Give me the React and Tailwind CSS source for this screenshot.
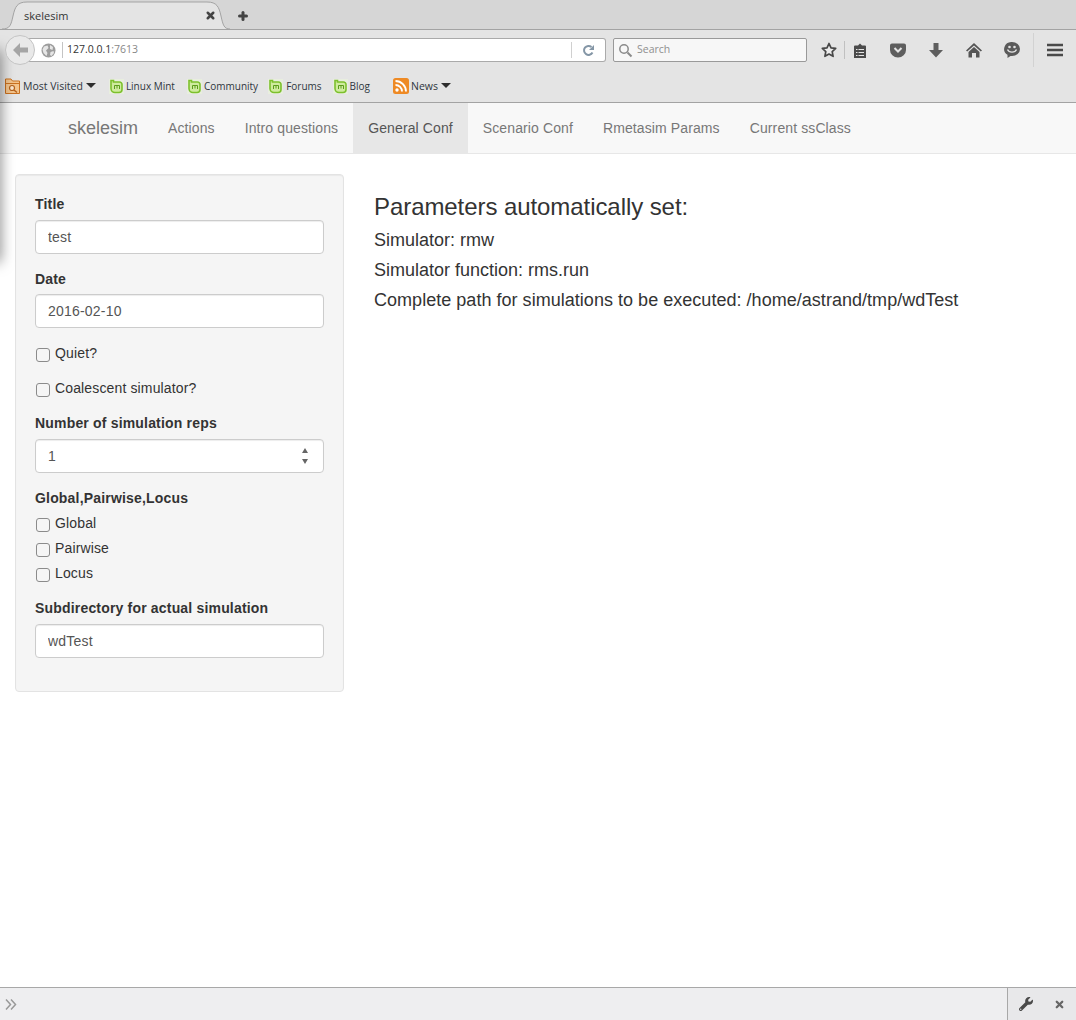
import React from 'react';
import { X, Plus } from 'lucide-react';
import { FaWrench } from 'react-icons/fa';

const uiFont = "font-['Open_Sans',sans-serif]";

function MintIcon() {
  return (
    <svg width="15" height="15" viewBox="0 0 15 15" className="shrink-0 bg-[#e8eede]">
      <path d="M2 1.500h2.500v1.500H10.500A2.500 2.500 0 0 1 13 5.500v5A3 3 0 0 1 10 13.500H6a4 4 0 0 1-4-4z" fill="#cfeb9e" stroke="#7cc02c" strokeWidth="1.600" />
      <path d="M5.500 10V6.500h5V10M8 6.500V9.500" fill="none" stroke="#5c9c1c" strokeWidth="1" />
    </svg>
  );
}

function Caret() {
  return <span className="ml-[3px] mt-[-2px] h-0 w-0 border-x-[5px] border-t-[5px] border-x-transparent border-t-[#2e2e2e]" />;
}

function Bookmark({ label, className, gap }) {
  return (
    <div className={`flex items-center ${className}`}>
      <MintIcon />
      <span className={`${gap} text-[10px] text-[#2f3640]`}>{label}</span>
    </div>
  );
}

function TextInput({ value }) {
  return (
    <input
      readOnly
      value={value}
      className="block h-[34px] w-full rounded-[4px] border border-[#ccc] bg-white px-3 text-[14px] tracking-[0.2px] text-[#555] shadow-[inset_0_1px_1px_rgba(0,0,0,0.075)] outline-none"
    />
  );
}

function Check({ label, className }) {
  return (
    <label className={`flex h-5 items-start ${className}`}>
      <input type="checkbox" className="ml-px mt-[5px] h-[14px] w-[14px] appearance-none rounded-[3px] border border-[#8b8b8b] bg-[#f5f5f5]" />
      <span className="ml-[5px] text-[14px] leading-5 tracking-[0.14px] text-[#333]">{label}</span>
    </label>
  );
}

function FieldLabel({ children, className = 'mb-[5px]' }) {
  return <div className={`${className} text-[14px] font-bold leading-5 tracking-[0.18px] text-[#333]`}>{children}</div>;
}

function BrowserChrome() {
  return (
    <div className={uiFont}>
      {/* tab strip */}
      <div className="flex h-[30px] items-start border-b border-[#a3a3a3] bg-[#d6d6d6]">
        <div className="relative z-10 ml-[2px] h-[30px] w-[228px]">
          <svg width="228" height="30" viewBox="0 0 228 30" className="absolute left-0 top-0">
            <path d="M0 29c8 0 9-4 11-13C13 7 15 2 25 2h180c10 0 12 5 14 14 2 9 3 13 9 13" fill="#e4e4e4" stroke="#a3a3a3" />
          </svg>
          <span className="absolute left-[22px] top-[8px] text-[11px] leading-4 text-[#333]">skelesim</span>
          <X size={11} strokeWidth={5.500} className="absolute left-[203px] top-[10px] text-[#444]" />
        </div>
        <Plus size={12} strokeWidth={6} className="ml-[7px] mt-[10px] text-[#444]" />
      </div>

      {/* toolbar */}
      <div className="flex h-[40px] items-center bg-[#e4e4e4] pl-[5px]">
        <div className="relative z-10 flex h-[30px] w-[30px] shrink-0 items-center justify-center rounded-full border border-[#c4c4c4] bg-[#e9e9e9]">
          <svg width="15" height="14" viewBox="0 0 15 14">
            <path d="M7 0 0 7l7 7V9.500h8v-5H7z" fill="#a5a5a5" />
          </svg>
        </div>
        <div className="ml-[-6px] flex h-[24px] w-[577px] items-center rounded-r-[3px] border border-l-0 border-[#aaa] bg-white pl-[12px]">
          <svg width="15" height="15" viewBox="0 0 15 15" className="shrink-0">
            <circle cx="7.500" cy="7.500" r="7" fill="#9d9d9d" />
            <path d="M3 3.500 6.500 2.500 7.500 5 5 7.500 6.500 10 5.500 13 2.500 10 1.500 6.500zM9 2l3 2-.5 3-2.500-1zM9.500 9l3-1 .5 2-2.500 3-1.500-1z" fill="#e6e6e6" />
          </svg>
          <span className="ml-[6px] mr-[4px] h-[16px] w-px bg-[#c4c4c4]" />
          <span className="text-[10.5px] text-[#333]">127.0.0.1<span className="text-[#888]">:7613</span></span>
          <span className="ml-auto h-[16px] w-px bg-[#d0d0d0]" />
          <svg width="13" height="13" viewBox="0 0 13 13" className="mx-[10px]">
            <path d="M10.500 8.500A4.500 4.500 0 1 1 9.500 3" fill="none" stroke="#8496a6" strokeWidth="2" />
            <path d="M12 1v5H7z" fill="#8496a6" />
          </svg>
        </div>
        <div className="ml-[7px] flex h-[24px] w-[194px] items-center rounded-[2px] border border-[#999] bg-[#f7f7f7] pl-[4px]">
          <svg width="15" height="15" viewBox="0 0 15 15">
            <circle cx="6" cy="6" r="4.200" fill="none" stroke="#8a8a8a" strokeWidth="1.500" />
            <path d="m9.500 9.500 4 4" stroke="#8a8a8a" strokeWidth="2" />
          </svg>
          <span className="ml-[4px] text-[10.5px] text-[#8f8f8f]">Search</span>
        </div>

        <svg width="16" height="16" viewBox="0 0 16 16" className="ml-[14px]">
          <path d="m8 1.500 2 4.300 4.700.6-3.500 3.200.9 4.700L8 12l-4.100 2.300.9-4.700L1.300 6.400 6 5.800z" fill="#ececec" stroke="#474747" strokeWidth="1.700" strokeLinejoin="round" />
        </svg>
        <span className="ml-[7px] h-[18px] w-px bg-[#c0c0c0]" />
        <svg width="14" height="15" viewBox="0 0 14 15" className="ml-[8px]">
          <path d="M1 3.500a1 1 0 0 1 1-1h3L7 .500l2 2h3a1 1 0 0 1 1 1V15H1z" fill="#4b4b4b" />
          <path d="M3 6.500h1.500M3 9.500h1.500M3 12.500h1.500M5.500 6.500H11M5.500 9.500H11M5.500 12.500H11" stroke="#e4e4e4" strokeWidth="1.200" />
        </svg>
        <svg width="16" height="15" viewBox="0 0 16 15" className="ml-[23px]">
          <path d="M0 2.500A2 2 0 0 1 2 .500h12a2 2 0 0 1 2 2V7a8 7.500 0 0 1-16 0z" fill="#5e5e5e" />
          <path d="m4.500 5 3.500 3.500L11.500 5" fill="none" stroke="#e4e4e4" strokeWidth="2" />
        </svg>
        <svg width="14" height="15" viewBox="0 0 14 15" className="ml-[23px]">
          <path d="M4.500 0h5v7H14l-7 7.500L0 7h4.500z" fill="#5e5e5e" />
        </svg>
        <svg width="16" height="15" viewBox="0 0 16 15" className="ml-[23px]">
          <path d="M8 0 16 7.500 14.800 8.500 8 2.500 1.200 8.500 0 7.500z" fill="#555" />
          <path d="M8 4 13.500 9v5.500H10V10H6v4.500H2.500V9z" fill="#555" />
        </svg>
        <svg width="16" height="16" viewBox="0 0 16 16" className="ml-[22px]">
          <path d="M8 0a8 7 0 0 1 0 14H6.500L3.500 16V12.800A7.500 7 0 0 1 8 0z" fill="#5a5a5a" />
          <circle cx="5.500" cy="5" r="1.300" fill="#e4e4e4" />
          <circle cx="10.500" cy="5" r="1.300" fill="#e4e4e4" />
          <path d="M3.500 7.500c1.500 3.500 7.500 3.500 9 0" fill="none" stroke="#e4e4e4" strokeWidth="1.400" />
        </svg>
        <span className="ml-[13px] h-[34px] w-px bg-[#d2d2d2]" />
        <svg width="16" height="14" viewBox="0 0 16 14" className="ml-[13px]">
          <path d="M.500 2h15M.500 7h15M.500 12h15" stroke="#4a4a4a" strokeWidth="2.600" strokeLinecap="round" />
        </svg>
      </div>

      {/* bookmarks */}
      <div className="flex h-[33px] items-center border-b border-[#a3a3a3] bg-[#e4e4e4] pl-[5px]">
        <svg width="15" height="16" viewBox="0 0 15 16" className="shrink-0">
          <path d="M.500 1h5.500l1.500 2h7v12.500H.500z" fill="#f3c48c" stroke="#c9701f" />
          <path d="M.500 5.500h14" stroke="#c9701f" />
          <circle cx="7" cy="10" r="2.500" fill="#fbe7cf" stroke="#b5611b" strokeWidth="1.200" />
          <path d="m9 12 3 2.500" stroke="#b5611b" strokeWidth="1.400" />
        </svg>
        <span className="ml-[3px] mt-[1px] text-[10.5px] text-[#2f3640]">Most Visited</span>
        <Caret />
        <Bookmark label="Linux Mint" className="ml-[13px]" gap="ml-[2px]" />
        <Bookmark label="Community" className="ml-[12px]" gap="ml-[2px]" />
        <Bookmark label="Forums" className="ml-[10px]" gap="ml-[3px]" />
        <Bookmark label="Blog" className="ml-[11px]" gap="ml-[2px]" />
        <svg width="16" height="16" viewBox="0 0 16 16" className="ml-[23px] shrink-0">
          <rect width="16" height="16" rx="2.500" fill="#ee8a25" />
          <circle cx="4" cy="12" r="1.700" fill="#fff" />
          <path d="M2.500 7a6.500 6.500 0 0 1 6.500 6.500M2.500 3a10.500 10.500 0 0 1 10.500 10.500" fill="none" stroke="#fff" strokeWidth="1.900" />
        </svg>
        <span className="ml-[2px] mt-[1px] text-[10.5px] text-[#2f3640]">News</span>
        <Caret />
      </div>
    </div>
  );
}

function NavBar() {
  const items = ['Actions', 'Intro questions', 'General Conf', 'Scenario Conf', 'Rmetasim Params', 'Current ssClass'];
  return (
    <nav className="flex h-[51px] border-b border-[#e7e7e7] bg-[#f8f8f8] pl-[53px]">
      <span className="px-[15px] text-[18px] leading-[50px] text-[#777]">skelesim</span>
      {items.map((item) => (
        <span
          key={item}
          className={`px-[15px] text-[14px] leading-[50px] tracking-[0.11px] ${item === 'General Conf' ? 'bg-[#e7e7e7] text-[#555]' : 'text-[#777]'}`}
        >
          {item}
        </span>
      ))}
    </nav>
  );
}

function Sidebar() {
  return (
    <div className="h-[518px] w-[329px] shrink-0 rounded-[4px] border border-[#e3e3e3] bg-[#f5f5f5] p-[19px] shadow-[inset_0_1px_1px_rgba(0,0,0,0.05)]">
      <FieldLabel className="mb-[6px]">Title</FieldLabel>
      <TextInput value="test" />
      <div className="mt-[15px]">
        <FieldLabel>Date</FieldLabel>
        <TextInput value="2016-02-10" />
      </div>
      <Check label="Quiet?" className="mt-[15px]" />
      <Check label="Coalescent simulator?" className="mt-[15px]" />
      <div className="mt-[15px]">
        <FieldLabel>Number of simulation reps</FieldLabel>
        <div className="relative mt-[6px]">
          <TextInput value="1" />
          <svg width="6" height="16" viewBox="0 0 6 16" className="absolute right-[16px] top-[9px]">
            <path d="M3 0 6 5H0zM0 11h6l-3 5z" fill="#666" />
          </svg>
        </div>
      </div>
      <div className="mt-[15px]">
        <FieldLabel>Global,Pairwise,Locus</FieldLabel>
        <Check label="Global" />
        <Check label="Pairwise" className="mt-[5px]" />
        <Check label="Locus" className="mt-[5px]" />
      </div>
      <div className="mt-[15px]">
        <FieldLabel>Subdirectory for actual simulation</FieldLabel>
        <div className="mt-[6px]">
          <TextInput value="wdTest" />
        </div>
      </div>
    </div>
  );
}

export default function App() {
  return (
    <div className="relative flex h-[1020px] w-[1076px] flex-col overflow-hidden bg-white font-['Liberation_Sans',sans-serif]">
      <BrowserChrome />
      <NavBar />

      <main className="flex flex-1 items-start px-[15px] pt-[20px]">
        <Sidebar />
        <div className="ml-[30px] pt-[20px]">
          <h3 className="text-[24px] font-normal leading-[26px] tracking-[-0.07px] text-[#333]">Parameters automatically set:</h3>
          <p className="mt-[5px] text-[18px] leading-[30px] text-[#333]">Simulator: rmw</p>
          <p className="text-[18px] leading-[30px] text-[#333]">Simulator function: rms.run</p>
          <p className="text-[18px] leading-[30px] tracking-[0.03px] text-[#333]">Complete path for simulations to be executed: /home/astrand/tmp/wdTest</p>
        </div>
      </main>

      {/* devtools strip */}
      <div className={`flex h-[33px] items-center border-t border-[#a8a8a8] bg-[#eeeef0] ${uiFont}`}>
        <svg width="12" height="11" viewBox="0 0 12 11" className="ml-[5px]">
          <path d="m1 .500 4.500 5-4.500 5M6 .500l4.500 5-4.500 5" fill="none" stroke="#999" strokeWidth="1.500" />
        </svg>
        <div className="ml-auto flex h-full w-[69px] items-center border-l border-[#a8a8a8] bg-[#e8e8ea]">
          <FaWrench size={14} className="ml-[11px] text-[#4a4a4a]" />
          <X size={11} strokeWidth={5} className="ml-[21px] text-[#666]" />
        </div>
      </div>

      {/* window shadow bleeding over the page's left edge */}
      <div className="pointer-events-none absolute left-[-10px] top-[50px] h-[212px] w-[10px] shadow-[0_0_14px_rgba(0,0,0,0.55)]" />
    </div>
  );
}
